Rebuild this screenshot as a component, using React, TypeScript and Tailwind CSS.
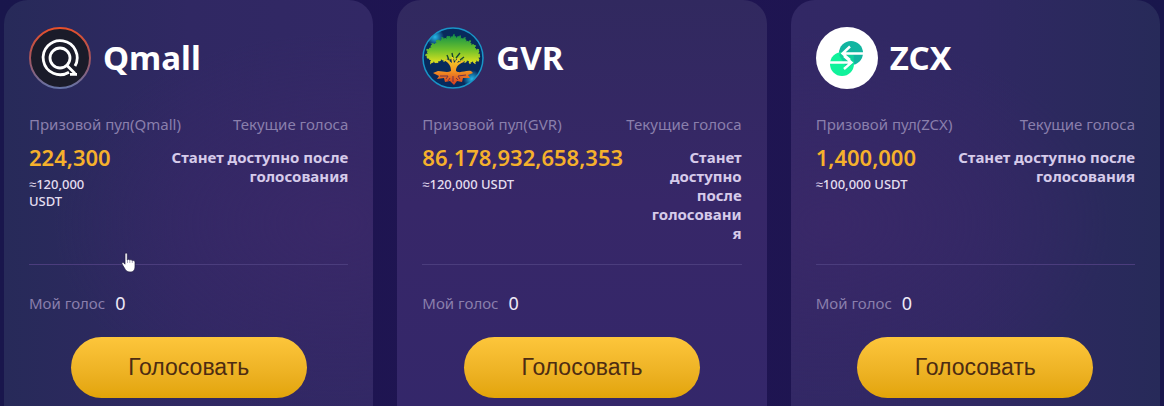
import type { ReactNode } from "react";

const QmallLogo = () => (
  <svg viewBox="0 0 62 62" className="w-[62px] h-[62px] shrink-0" aria-hidden="true">
    <defs>
      <linearGradient id="qmallRing" x1="0" y1="0" x2="0" y2="1">
        <stop offset="0" stopColor="#e8502a" />
        <stop offset="0.5" stopColor="#a4545c" />
        <stop offset="1" stopColor="#6573a6" />
      </linearGradient>
    </defs>
    <circle cx="31" cy="31" r="30" fill="#1a1b29" stroke="url(#qmallRing)" strokeWidth="2" />
    <g fill="none" stroke="#fff" strokeWidth="2.8">
      <path d="M40 45.2A17 17 0 1 1 46 39" />
      <circle cx="31" cy="31" r="10" />
      <path d="M37.5 38L46 46.5M41 47.3H48" />
    </g>
  </svg>
);

const GvrLogo = () => (
  <svg viewBox="0 0 62 62" className="w-[62px] h-[62px] shrink-0" aria-hidden="true">
    <defs>
      <linearGradient id="gvrLeaf" x1="0" y1="8" x2="0" y2="38" gradientUnits="userSpaceOnUse">
        <stop offset="0" stopColor="#159447" />
        <stop offset="0.5" stopColor="#6fc12b" />
        <stop offset="1" stopColor="#f2e71d" />
      </linearGradient>
      <linearGradient id="gvrTrunk" x1="0" y1="28" x2="0" y2="58" gradientUnits="userSpaceOnUse">
        <stop offset="0" stopColor="#efe02a" />
        <stop offset="0.5" stopColor="#f59a23" />
        <stop offset="1" stopColor="#d63a20" />
      </linearGradient>
      <radialGradient id="gvrGlow">
        <stop offset="0" stopColor="#26b8e8" />
        <stop offset="1" stopColor="#26b8e8" stopOpacity="0" />
      </radialGradient>
      <clipPath id="gvrClip">
        <circle cx="31" cy="31" r="30" />
      </clipPath>
    </defs>
    <circle cx="31" cy="31" r="30" fill="#082a5c" />
    <g clipPath="url(#gvrClip)">
      <circle cx="13" cy="10" r="9" fill="url(#gvrGlow)" />
      <circle cx="50" cy="52" r="9" fill="url(#gvrGlow)" />
    </g>
    <path
      d="M6 31L4 28L6 26L5 23L9 21L10 17L14 17L15 13L19 14L20 11L24 12L26 9L29 11L32 8L34 11L38 9L39 12L43 11L44 15L48 14L49 18L53 18L53 22L57 23L56 26L58 29L56 31L57 34L54 33L53 36L50 34L48 36L46 33L43 35L41 32L38 34L35 31L33 33L30 30L27 33L25 31L22 34L20 32L17 34L14 36L12 34L9 36L9 33Z"
      fill="url(#gvrLeaf)"
      stroke="url(#gvrLeaf)"
      strokeWidth="1.5"
      strokeDasharray="2 1"
    />
    <path d="M27 33L25 28M31 31L30 26M34 31L38 26M38 33L42 30" stroke="#164633" strokeWidth="1.4" fill="none" />
    <path
      d="M29 44C29 39 27 36 22 33L24 32C27 33 28 35 30 36L29 30H31L32 36L36 31L38 32L35 36L41 33L42 35C36 37 34 40 34 44C38 47 43 43 49 44L51 46L46 48L48 51L41 51L40 55L35 54L32 58L28 54L23 55L22 51L15 52L17 49L11 46L16 44C21 44 25 46 29 44Z"
      fill="url(#gvrTrunk)"
    />
    <path d="M18 49L26 49L24 52M44 48L36 49L38 52M31 49V55M28 51L26 54M34 51L36 53" stroke="#71324a" strokeWidth="1" fill="none" />
    <circle cx="31" cy="31" r="30" fill="none" stroke="#1995c8" strokeWidth="1.5" />
  </svg>
);

const ZcxLogo = () => (
  <svg viewBox="0 0 62 62" className="w-[62px] h-[62px] shrink-0" aria-hidden="true">
    <circle cx="31" cy="31" r="31" fill="#fff" />
    <circle cx="35" cy="26" r="12" fill="#12b5a0" />
    <circle cx="26" cy="37" r="12" fill="#10f29b" />
    <path d="M23 28C26 24 34 23 38 29L37 37L31 41Z" fill="#10cf9c" />
    <path d="M47 26.5H26M34 19.5L26.5 26.5L34 33" fill="none" stroke="#fff" strokeWidth="2.4" />
    <path d="M14 35.5H35M28 29L35.5 35.5L28 42" fill="none" stroke="#fff" strokeWidth="2.4" />
  </svg>
);

type Token = {
  name: string;
  pool: string;
  usdt: string;
  logo: ReactNode;
  background: string;
};

const tokens: Token[] = [
  {
    name: "Qmall",
    pool: "224,300",
    usdt: "≈120,000 USDT",
    logo: <QmallLogo />,
    background: "bg-[radial-gradient(ellipse_at_90%_55%,#392868_0%,#32276400_60%),linear-gradient(90deg,#272a59_0%,#302863_50%,#322865_100%)]",
  },
  {
    name: "GVR",
    pool: "86,178,932,658,353",
    usdt: "≈120,000 USDT",
    logo: <GvrLogo />,
    background: "bg-linear-to-b from-[#31295f] via-[#372768] to-[#34276a]",
  },
  {
    name: "ZCX",
    pool: "1,400,000",
    usdt: "≈100,000 USDT",
    logo: <ZcxLogo />,
    background: "bg-[radial-gradient(ellipse_at_10%_55%,#392868_0%,#32276400_60%),linear-gradient(270deg,#272a59_0%,#302863_50%,#322865_100%)]",
  },
];

const TokenCard = ({ token }: { token: Token }) => (
  <article className={`flex flex-col rounded-t-3xl px-[25px] pt-[27px] pb-2 ${token.background}`}>
    <div className="flex items-center gap-3">
      {token.logo}
      <h2 className="text-white font-bold text-[33px] leading-[44px]">{token.name}</h2>
    </div>

    <div className="mt-[25px] flex justify-between text-[15px] leading-5 text-[#8a7fac] whitespace-nowrap">
      <span>Призовой пул({token.name})</span>
      <span>Текущие голоса</span>
    </div>

    <div className="mt-2 flex flex-1 justify-between gap-[26px]">
      <div className="w-min shrink-0">
        <p className="text-[22px] leading-[30px] font-semibold text-[#f5b02c]">{token.pool}</p>
        <p className="mt-1 text-[13px] leading-[17px] font-medium text-[#e4def0]">{token.usdt}</p>
      </div>
      <p className="mt-[6px] min-w-0 flex-1 text-right text-[15px] leading-[19px] font-bold text-[#d6cbea] wrap-anywhere">
        Станет доступно после голосования
      </p>
    </div>

    <hr className="mt-[21px] border-[#4b3d7d]" />

    <div className="mt-[26px] flex items-center gap-[10px] leading-6">
      <span className="text-[15px] text-[#8a7fac]">Мой голос</span>
      <span className="text-[18px] text-[#eeeaf6]">0</span>
    </div>

    <button
      type="button"
      className="mt-[22px] mx-auto w-[236px] h-[61px] rounded-full bg-linear-to-b from-[#fdc63b] to-[#e2a407] font-['Liberation_Sans',sans-serif] text-[23px] text-[#4d2c12] cursor-pointer"
    >
      Голосовать
    </button>
  </article>
);

const App = () => {
  return (
    <main className="relative grid min-h-screen grid-cols-3 gap-6 bg-linear-to-r from-[#19164c] via-[#211454] to-[#19164c] px-1 font-['Noto_Sans',sans-serif]">
      {tokens.map((token) => (
        <TokenCard key={token.name} token={token} />
      ))}
      <svg viewBox="0 0 16 21" className="absolute left-[121px] top-[252px] w-4 h-[21px]" aria-hidden="true">
        <path
          d="M4 2C4 .5 6.2 .5 6.3 2V8C7 7 8.4 7.2 8.7 8.2C9.5 7.4 11 7.7 11.3 8.8C12.5 8.2 14 8.8 14 10V14C14 18 12.5 20 9 20C6 20 4.8 18.5 3.4 16L1 12C.5 10.7 2 9.9 3 11L4 12.2Z"
          fill="#fff"
          stroke="#211b44"
          strokeWidth="0.7"
        />
        <path d="M6.5 8V11M8.8 8.5V11M11.3 9V11" stroke="#777092" strokeWidth="0.6" />
      </svg>
    </main>
  );
};

export default App;
